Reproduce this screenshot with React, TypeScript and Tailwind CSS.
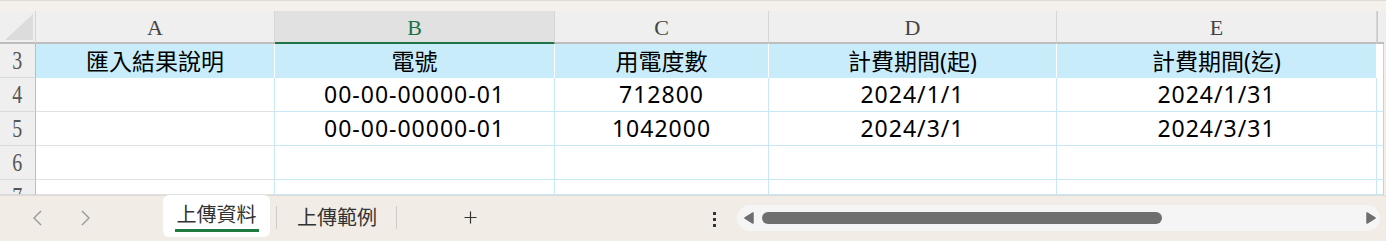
import { Plus } from 'lucide-react'

const cols = [
  { key: 'A', w: 'w-[239px]' },
  { key: 'B', w: 'w-[280px]' },
  { key: 'C', w: 'w-[214px]' },
  { key: 'D', w: 'w-[288px]' },
  { key: 'E', w: 'w-[320px]' },
]

const rows: { n: number; cells: string[]; h: string }[] = [
  { n: 4, cells: ['', '00-00-00000-01', '712800', '2024/1/1', '2024/1/31'], h: 'h-[34px]' },
  { n: 5, cells: ['', '00-00-00000-01', '1042000', '2024/3/1', '2024/3/31'], h: 'h-[34px]' },
  { n: 6, cells: ['', '', '', '', ''], h: 'h-[34px]' },
  { n: 7, cells: ['', '', '', '', ''], h: 'h-[15px]' },
]

const headers = ['匯入結果說明', '電號', '用電度數', '計費期間(起)', '計費期間(迄)']

function RowNum({ n, h }: { n: number; h: string }) {
  return (
    <div
      className={`${h} w-[36px] shrink-0 overflow-hidden bg-[#efefef] border-r border-b border-r-[#bdbdbd] border-b-[#d9d9d9] flex items-start justify-center`}
    >
      <span className="mt-[3px] inline-block scale-x-[0.8] text-[25px] leading-[28px] text-[#555] font-['Liberation_Serif',serif]">
        {n}
      </span>
    </div>
  )
}

export default function App() {
  return (
    <div className="w-[1386px] h-[241px] overflow-hidden bg-[#f1ede8] font-['Noto_Sans','Noto_Sans_CJK_TC',sans-serif] text-black">
      {/* top strip */}
      <div className="h-[11px] bg-[#f4f1ed] border-t border-[#dedad5]" />

      <div className="flex">
        <div className="flex flex-col w-[1384px] bg-white">
          {/* column letters */}
          <div className="flex h-[33px]">
            <div className="w-[36px] shrink-0 bg-[#efefef] border-r border-b-2 border-r-[#d6d6d6] border-b-[#bdbdbd] relative overflow-hidden">
              <svg className="absolute right-[2px] bottom-[2px]" width="28" height="26" viewBox="0 0 28 26">
                <polygon points="28,0 28,26 0,26" fill="#dcdcdc" />
              </svg>
            </div>
            {cols.map((c) => (
              <div
                key={c.key}
                className={`${c.w} shrink-0 flex items-center justify-center border-r font-['Liberation_Serif',serif] text-[22px] leading-none ${
                  c.key === 'B'
                    ? 'bg-[#e1e1e1] border-b-2 border-b-[#217346] border-r-[#d6d6d6] text-[#1e7145]'
                    : 'bg-[#efefef] border-b-2 border-b-[#bdbdbd] border-r-[#d6d6d6] text-[#444]'
                }`}
              >
                <span className="mt-[3px]">{c.key}</span>
              </div>
            ))}
            <div className="flex-1 bg-[#efefef] border-b-2 border-b-[#bdbdbd] border-l border-l-[#c8c8c8]" />
          </div>

          {/* header row 3 */}
          <div className="flex h-[34px]">
            <RowNum n={3} h="h-[34px]" />
            {cols.map((c, i) => (
              <div
                key={c.key}
                className={`${c.w} shrink-0 bg-[#c8ecfa] border-r border-white flex items-center justify-center text-[23px] leading-none`}
              >
                {headers[i]}
              </div>
            ))}
            <div className="flex-1 bg-white border-r border-[#cfcfcf]" />
          </div>

          {rows.map((r) => (
            <div key={r.n} className={`flex ${r.h}`}>
              <RowNum n={r.n} h={r.h} />
              {cols.map((c, i) => (
                <div
                  key={c.key}
                  className={`${c.w} shrink-0 border-r border-b border-r-[#c7e8f7] ${
                    i === 0 ? 'border-b-[#e1e1e1]' : 'border-b-[#c7e8f7]'
                  } flex items-center justify-center text-[23px] tracking-[1px] leading-none`}
                >
                  {r.cells[i]}
                </div>
              ))}
              <div className="flex-1 bg-white border-b border-b-[#c7e8f7] border-r border-[#cfcfcf]" />
            </div>
          ))}
        </div>
      </div>

      {/* sheet tab bar */}
      <div className="h-[46px] bg-[#f1ece6] border-t border-[#dedad5] flex items-start whitespace-nowrap font-['Noto_Sans_CJK_TC',sans-serif]">
        <div className="flex items-center h-[44px] pl-[32px] gap-[39px]">
          <svg width="10" height="16" viewBox="0 0 10 16">
            <polyline points="9,1 2,8 9,15" fill="none" stroke="#999" strokeWidth="1.4" />
          </svg>
          <svg width="10" height="16" viewBox="0 0 10 16">
            <polyline points="1,1 8,8 1,15" fill="none" stroke="#999" strokeWidth="1.4" />
          </svg>
        </div>
        <div className="ml-[72px] w-[107px] h-[42px] bg-white rounded-[6px] flex flex-col items-center justify-start -mt-px">
          <span className="mt-[5px] text-[20px] leading-[28px] text-[#333]">上傳資料</span>
          <div className="mt-[1px] w-[84px] h-[3px] bg-[#1e7a3f]" />
        </div>
        <div className="ml-[6px] mt-[10px] w-px h-[23px] bg-[#cfcbc6]" />
        <span className="ml-[20px] mt-[7px] text-[20px] leading-[28px] text-[#333]">上傳範例</span>
        <div className="ml-[19px] mt-[10px] w-px h-[23px] bg-[#cfcbc6]" />
        <div className="ml-[64px] mt-[12px] text-[#333]">
          <Plus size={19} strokeWidth={1.5} />
        </div>
        <div className="ml-[233px] mt-[16px] flex flex-col gap-[3px]">
          <div className="w-[3px] h-[3px] bg-[#333]" />
          <div className="w-[3px] h-[3px] bg-[#333]" />
          <div className="w-[3px] h-[3px] bg-[#333]" />
        </div>
        <div className="ml-[21px] mt-[9px] w-[643px] h-[26px] bg-[#f5f5f5] rounded-full flex items-center">
          <svg className="ml-[7px]" width="10" height="12" viewBox="0 0 10 12">
            <path d="M9 1 L1 6 L9 11 Z" fill="#6f6f6f" stroke="#6f6f6f" strokeWidth="1.5" strokeLinejoin="round" />
          </svg>
          <div className="ml-[8px] w-[400px] h-[12px] bg-[#6f6f6f] rounded-full" />
          <svg className="ml-auto mr-[4px]" width="10" height="12" viewBox="0 0 10 12">
            <path d="M1 1 L9 6 L1 11 Z" fill="#6f6f6f" stroke="#6f6f6f" strokeWidth="1.5" strokeLinejoin="round" />
          </svg>
        </div>
      </div>
    </div>
  )
}
